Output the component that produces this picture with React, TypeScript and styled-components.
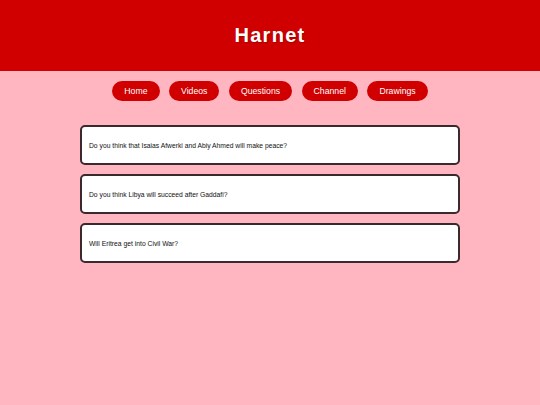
import React from "react";
import styled, { createGlobalStyle } from "styled-components";

const Global = createGlobalStyle`
  html, body { margin: 0; padding: 0; }
  body {
    background: #ffb6c1;
    font-family: "Liberation Sans", Arial, sans-serif;
  }
`;

const Header = styled.header`
  background: #d10000;
  height: 71px;
  display: flex;
  align-items: center;
  justify-content: center;
`;

const Title = styled.h1`
  margin: 0;
  color: #ffffff;
  font-size: 20px;
  font-weight: bold;
  letter-spacing: 1.3px;
  text-shadow: 1px 1px 2px rgba(0, 0, 0, 0.25);
`;

const Nav = styled.nav`
  display: flex;
  justify-content: center;
  gap: 9.5px;
  margin-top: 10px;
`;

const NavButton = styled.a`
  display: flex;
  align-items: center;
  justify-content: center;
  height: 20px;
  padding: 0 12px;
  border-radius: 10px;
  background: #d10000;
  color: #ffffff;
  font-size: 8.7px;
  text-decoration: none;
`;

const List = styled.main`
  display: flex;
  flex-direction: column;
  gap: 9px;
  width: 380px;
  margin: 24px auto 0;
`;

const Card = styled.div`
  box-sizing: border-box;
  height: 40px;
  background: #ffffff;
  border: 2px solid #3a2a2e;
  border-radius: 5px;
  display: flex;
  align-items: center;
  padding: 0 7px;
  font-size: 6.75px;
  color: #111111;
`;

const links = ["Home", "Videos", "Questions", "Channel", "Drawings"];
const questions = [
  "Do you think that Isaias Afwerki and Abiy Ahmed will make peace?",
  "Do you think Libya will succeed after Gaddafi?",
  "Will Eritrea get into Civil War?",
];

export default function App() {
  return (
    <>
      <Global />
      <Header>
        <Title>Harnet</Title>
      </Header>
      <Nav>
        {links.map((l) => (
          <NavButton key={l} href="#">
            {l}
          </NavButton>
        ))}
      </Nav>
      <List>
        {questions.map((q) => (
          <Card key={q}>{q}</Card>
        ))}
      </List>
    </>
  );
}
